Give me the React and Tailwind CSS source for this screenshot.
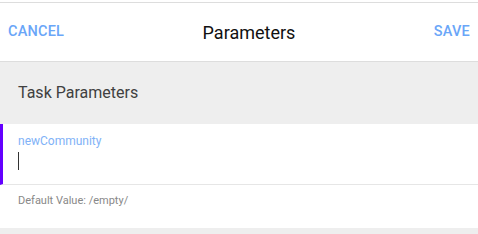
export default function App() {
  return (
    <div className="w-[478px] h-[234px] bg-[#eeeeee] overflow-hidden" style={{ fontFamily: "Roboto, 'Liberation Sans', sans-serif" }}>
      <div className="h-[2px] bg-white" />
      <div className="h-[60px] bg-white border-t border-b border-[#dddddd] flex items-center justify-between px-[8px]">
        <button className="text-[14.5px] font-medium text-[#6aa6f8] tracking-[0.2px]">CANCEL</button>
        <div className="text-[18px] text-[#111111]">Parameters</div>
        <button className="text-[14.5px] font-medium text-[#6aa6f8] tracking-[0.2px]">SAVE</button>
      </div>
      <div className="h-[62px] flex items-center px-[18px]">
        <span className="text-[16px] text-[#404040]">Task Parameters</span>
      </div>
      <div className="bg-white">
        <div className="h-[61px] border-l-[3px] border-[#6400ff] pl-[15px] pt-[8px] border-b border-b-[#e6e6e6]">
          <div className="text-[12px] leading-[18px] text-[#7fb2f7]">newCommunity</div>
          <div className="mt-[2px] w-[1px] h-[18px] bg-[#333333]" />
        </div>
        <div className="h-[43px] px-[18px] pt-[9px]">
          <div className="text-[11px] leading-[14px] text-[#888888]">Default Value: /empty/</div>
        </div>
      </div>
    </div>
  );
}
